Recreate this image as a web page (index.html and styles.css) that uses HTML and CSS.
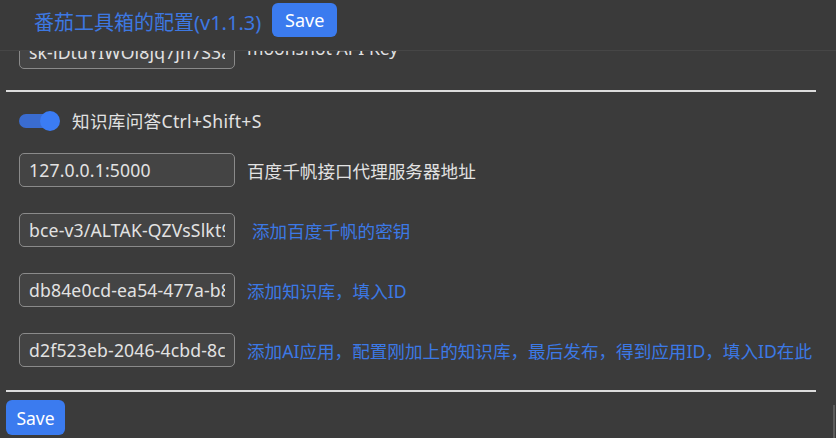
FILE: index.html
```html
<!DOCTYPE html>
<html lang="zh-CN">
<head>
<meta charset="utf-8">
<title>番茄工具箱的配置</title>
<link rel="stylesheet" href="styles.css">
</head>
<body>
<header class="header">
  <div class="header-row">
    <span class="title">番茄工具箱的配置(v1.1.3)</span>
    <button class="btn btn-top">Save</button>
  </div>
</header>
<main class="content">
  <div class="row row-first">
    <input class="field" type="text" value="sk-lDtuYIWOl8jq7jn7S3abcd">
    <span class="label">moonshot API Key</span>
  </div>
  <hr class="rule rule-top">
  <div class="toggle-row">
    <span class="switch"><span class="knob"></span></span>
    <span class="label toggle-label">知识库问答Ctrl+Shift+S</span>
  </div>
  <div class="row">
    <input class="field" type="text" value="127.0.0.1:5000">
    <span class="label">百度千帆接口代理服务器地址</span>
  </div>
  <div class="row">
    <input class="field" type="text" value="bce-v3/ALTAK-QZVsSlkt9abcd">
    <span class="label label-blue label-shift">添加百度千帆的密钥</span>
  </div>
  <div class="row">
    <input class="field" type="text" value="db84e0cd-ea54-477a-b8c1">
    <span class="label label-blue">添加知识库，填入ID</span>
  </div>
  <div class="row">
    <input class="field" type="text" value="d2f523eb-2046-4cbd-8c3f9">
    <span class="label label-blue">添加AI应用，配置刚加上的知识库，最后发布，得到应用ID，填入ID在此</span>
  </div>
  <hr class="rule rule-bottom">
  <button class="btn btn-bottom">Save</button>
</main>
<div class="scroll-thumb"></div>
</body>
</html>
```
FILE: styles.css
```css
html, body {
  margin: 0;
  padding: 0;
}
body {
  background: #3b3b3b;
  font-family: "Noto Sans", "Noto Sans CJK SC", sans-serif;
  color: #e2e2e2;
  height: 438px;
  overflow: hidden;
}
.header {
  position: fixed;
  top: 0;
  left: 0;
  right: 0;
  height: 50px;
  background: #3a3a3a;
  border-bottom: 1px solid #464646;
  z-index: 5;
}
.header-row {
  height: 40px;
  display: flex;
  align-items: center;
  padding-left: 34px;
  gap: 10px;
}
.title {
  font-size: 20px;
  color: #3d78e2;
  white-space: nowrap;
  padding-top: 3px;
}
.btn {
  background: #3b7bef;
  color: #ffffff;
  border: 0;
  font-family: "Noto Sans", "Noto Sans CJK SC", sans-serif;
  font-size: 18px;
  padding: 0;
  cursor: pointer;
}
.btn-top {
  width: 65px;
  height: 34px;
  border-radius: 6px;
  margin-left: 1px;
}
.btn-bottom {
  width: 59px;
  height: 35px;
  border-radius: 6px;
  margin-top: 8px;
  font-size: 17.5px;
}
.content {
  padding: 35px 20px 0 6px;
}
.row {
  display: flex;
  align-items: center;
  gap: 12px;
  height: 34px;
  padding-left: 13px;
  margin-bottom: 26px;
}
.row-first {
  margin-bottom: 0;
}
.row-first .label {
  position: relative;
  top: -4px;
}
.field {
  box-sizing: border-box;
  width: 216px;
  height: 34px;
  flex: none;
  background: #444444;
  border: 1px solid #8a8a8a;
  border-radius: 5px;
  color: #e2e2e2;
  font-family: "Noto Sans", "Noto Sans CJK SC", sans-serif;
  font-size: 17.6px;
  letter-spacing: 0.15px;
  padding: 0 9px 0 9px;
  outline: none;
}
.label {
  font-size: 17.6px;
  white-space: nowrap;
  color: #e2e2e2;
}
.label-blue {
  color: #3c79e6;
}
.label-shift {
  margin-left: 5px;
}
.toggle-label {
  letter-spacing: 0.3px;
  position: relative;
  top: -1px;
}
.rule {
  border: 0;
  height: 2px;
  background: #dcdcdc;
  margin: 0;
}
.rule-top {
  margin-top: 21px;
}
.rule-bottom {
  margin-top: -3px;
}
.toggle-row {
  display: flex;
  align-items: center;
  gap: 13px;
  height: 20px;
  padding-left: 13px;
  margin-top: 19px;
  margin-bottom: 22px;
}
.switch {
  position: relative;
  width: 40px;
  height: 14px;
  border-radius: 7px;
  background: #3a6cd0;
  flex: none;
}
.knob {
  position: absolute;
  right: -1px;
  top: -3px;
  width: 20px;
  height: 20px;
  border-radius: 50%;
  background: #3b7cf4;
}
.scroll-thumb {
  position: fixed;
  right: 1px;
  top: 405px;
  width: 2px;
  height: 33px;
  background: #5c5c5c;
}
```
